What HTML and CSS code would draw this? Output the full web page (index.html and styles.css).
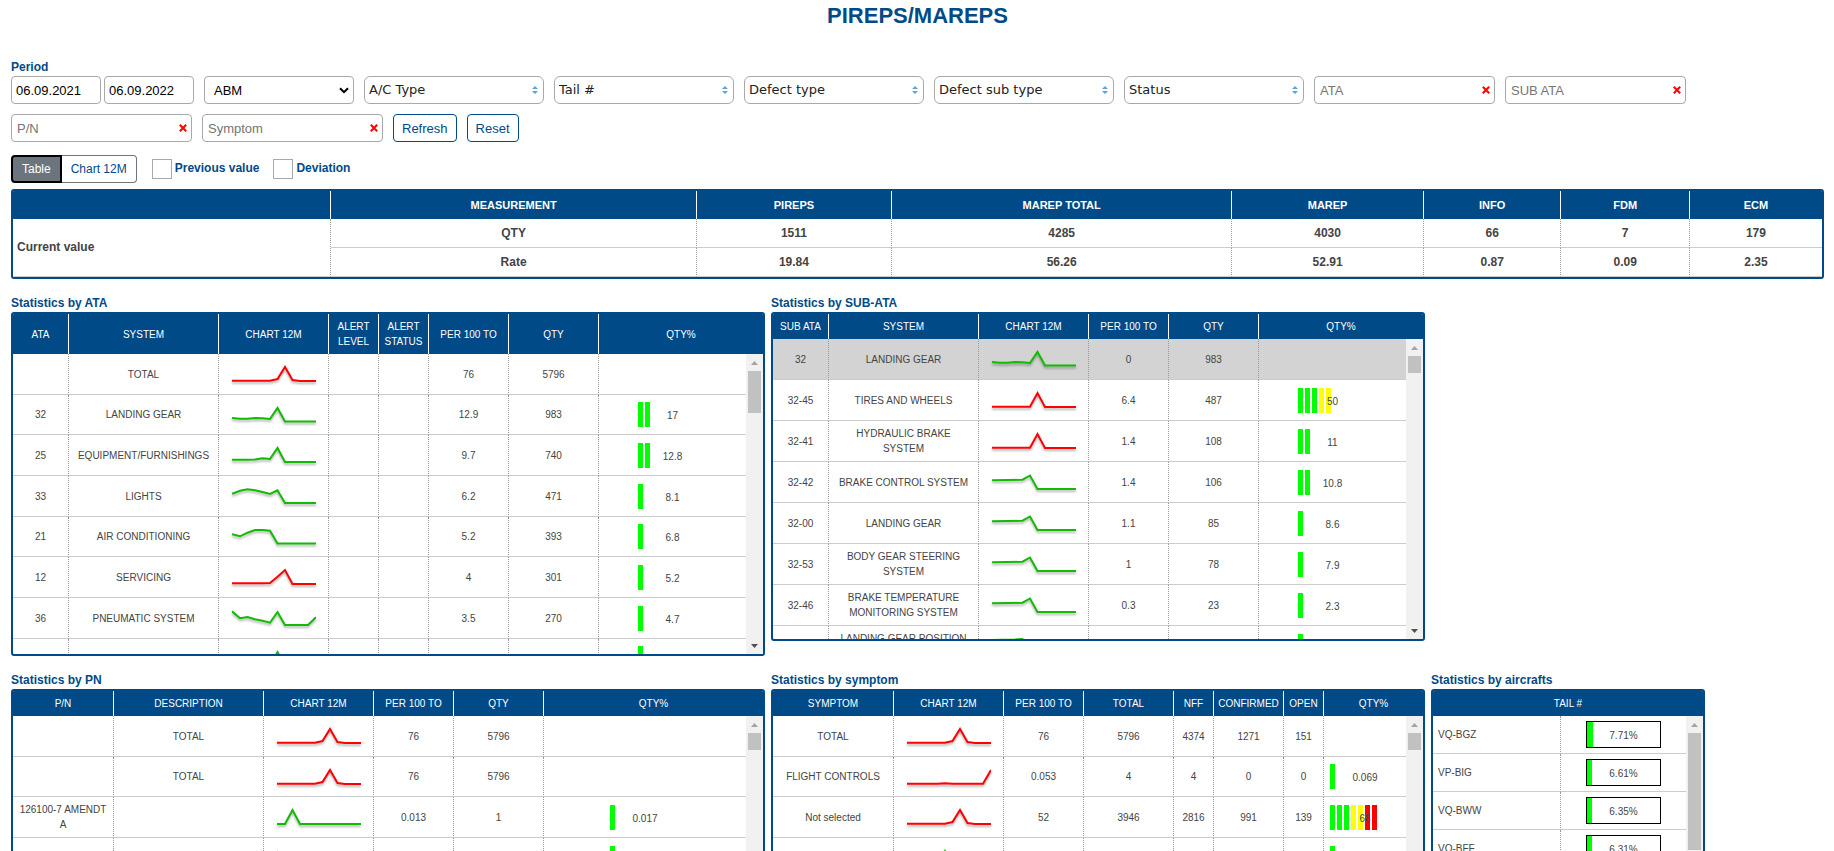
FILE: index.html
```html
<!DOCTYPE html>
<html lang="en">
<head>
<meta charset="utf-8">
<title>PIREPS/MAREPS</title>
<link rel="stylesheet" href="styles.css">
</head>
<body>
<svg class="defs" aria-hidden="true">
  <symbol id="updown" viewBox="0 0 6 8"><path d="M3 0 6 3H0zM3 8 0 5h6z"/></symbol>
  <symbol id="chevron" viewBox="0 0 10 7"><path d="M1 1.2 5 5.2 9 1.2"/></symbol>
  <symbol id="cross" viewBox="0 0 8 8"><path d="M.8.8 7.2 7.2M7.2.8.8 7.2"/></symbol>
  <symbol id="up" viewBox="0 0 7 4"><path d="M3.500 0 7 4H0z"/></symbol>
  <symbol id="down" viewBox="0 0 7 4"><path d="M0 0h7L3.500 4z"/></symbol>
  <symbol id="c-total" viewBox="0 0 84 24"><polyline points="0,18.700 38,18.700 45.500,17 53,5 60.500,18 68,19 84,19"/></symbol>
  <symbol id="c-gear" viewBox="0 0 84 24"><polyline points="0,15 8,15.700 15.500,15.700 23,15 30.500,15.300 38,16 45.500,5 53,18.500 84,18.500"/></symbol>
  <symbol id="c-equip" viewBox="0 0 84 24"><polyline points="0,16.700 15.500,16.700 23,16.400 30.500,15.300 38,16 45.500,5 53,19 84,19"/></symbol>
  <symbol id="c-lights" viewBox="0 0 84 24"><polyline points="0,9.700 8,6.700 15.500,5.300 23,6.300 30.500,8 38,10 45.500,6.300 53,19 84,19"/></symbol>
  <symbol id="c-air" viewBox="0 0 84 24"><polyline points="0,9.300 8,11.300 15.500,7.700 23,5 30.500,5 38,5.700 45.500,18.500 84,18.500"/></symbol>
  <symbol id="c-serv" viewBox="0 0 84 24"><polyline points="0,18.300 30.500,18.300 38,18 45.500,11.700 53,5 60.500,19 84,19"/></symbol>
  <symbol id="c-pneu" viewBox="0 0 84 24"><polyline points="0,5.300 8,12.300 15.500,11 23,13.300 30.500,14.700 38,16.700 45.500,6 53,19 76,19 84,11.300"/></symbol>
  <symbol id="c-peak" viewBox="0 0 84 24"><polyline points="0,18.700 38,18.700 45.500,5 53,19 84,19"/></symbol>
  <symbol id="c-brake" viewBox="0 0 84 24"><polyline points="0,10.300 30.500,9.700 38,5.500 45.500,19 84,19"/></symbol>
  <symbol id="c-pos" viewBox="0 0 84 24"><polyline points="0,6 23,5.500 30.500,5 38,19 84,19"/></symbol>
  <symbol id="c-early" viewBox="0 0 84 24"><polyline points="0,19 8,19 15.500,5 23,19 84,19"/></symbol>
  <symbol id="c-late" viewBox="0 0 84 24"><polyline points="0,18.700 30.500,18.700 38,18.200 45.500,18.700 76,18.700 84,5"/></symbol>
  <symbol id="c-mid" viewBox="0 0 84 24"><polyline points="0,19 30.500,19 38,5 45.500,19 84,19"/></symbol>
  <symbol id="c-first" viewBox="0 0 84 24"><polyline points="0,5 8,19 84,19"/></symbol>
</svg>

<h1>PIREPS/MAREPS</h1>

<form class="filters">
  <label class="label" for="from">Period</label>
  <div class="row">
    <div class="period">
      <input class="field date" id="from" type="text" value="06.09.2021">
      <input class="field date" type="text" aria-label="Period end" value="06.09.2022">
    </div>
    <div class="wrap operator"><select class="field" aria-label="Operator"><option>ABM</option></select><svg class="chevron"><use href="#chevron"/></svg></div>
    <div class="wrap multi"><select class="field" aria-label="A/C Type"><option>A/C Type</option></select><svg class="updown"><use href="#updown"/></svg></div>
    <div class="wrap multi"><select class="field" aria-label="Tail"><option>Tail #</option></select><svg class="updown"><use href="#updown"/></svg></div>
    <div class="wrap multi"><select class="field" aria-label="Defect type"><option>Defect type</option></select><svg class="updown"><use href="#updown"/></svg></div>
    <div class="wrap multi"><select class="field" aria-label="Defect sub type"><option>Defect sub type</option></select><svg class="updown"><use href="#updown"/></svg></div>
    <div class="wrap multi"><select class="field" aria-label="Status"><option>Status</option></select><svg class="updown"><use href="#updown"/></svg></div>
    <div class="wrap search"><input class="field" type="text" placeholder="ATA" aria-label="ATA"><button class="clear" type="button" aria-label="Clear"><svg><use href="#cross"/></svg></button></div>
    <div class="wrap search"><input class="field" type="text" placeholder="SUB ATA" aria-label="SUB ATA"><button class="clear" type="button" aria-label="Clear"><svg><use href="#cross"/></svg></button></div>
    <div class="wrap search"><input class="field" type="text" placeholder="P/N" aria-label="P/N"><button class="clear" type="button" aria-label="Clear"><svg><use href="#cross"/></svg></button></div>
    <div class="wrap search"><input class="field" type="text" placeholder="Symptom" aria-label="Symptom"><button class="clear" type="button" aria-label="Clear"><svg><use href="#cross"/></svg></button></div>
    <button class="btn" type="button">Refresh</button>
    <button class="btn" type="button">Reset</button>
  </div>
</form>

<div class="options">
  <div class="toggle"><button class="active" type="button">Table</button><button type="button">Chart 12M</button></div>
  <div class="check"><input type="checkbox" id="prev"><label class="label" for="prev">Previous value</label></div>
  <div class="check"><input type="checkbox" id="dev"><label class="label" for="dev">Deviation</label></div>
</div>

<div class="panel summary">
  <table>
    <colgroup><col class="s1"><col class="s2"><col class="s3"><col class="s4"><col class="s5"><col class="s6"><col class="s7"><col></colgroup>
    <thead><tr><th></th><th>MEASUREMENT</th><th>PIREPS</th><th>MAREP TOTAL</th><th>MAREP</th><th>INFO</th><th>FDM</th><th>ECM</th></tr></thead>
    <tbody>
      <tr><td class="name" rowspan="2">Current value</td><td>QTY</td><td>1511</td><td>4285</td><td>4030</td><td>66</td><td>7</td><td>179</td></tr>
      <tr><td>Rate</td><td>19.84</td><td>56.26</td><td>52.91</td><td>0.87</td><td>0.09</td><td>2.35</td></tr>
    </tbody>
  </table>
</div>

<div class="stats">
  <section class="wide">
    <h2>Statistics by ATA</h2>
    <div class="panel">
      <table>
        <colgroup><col class="w56"><col class="w150"><col class="w110"><col class="w50"><col class="w50"><col class="w80"><col class="w90"><col></colgroup>
        <thead><tr><th>ATA</th><th>SYSTEM</th><th>CHART 12M</th><th>ALERT LEVEL</th><th>ALERT STATUS</th><th>PER 100 TO</th><th>QTY</th><th>QTY%</th></tr></thead>
      </table>
      <div class="body">
        <table>
          <colgroup><col class="w56"><col class="w150"><col class="w110"><col class="w50"><col class="w50"><col class="w80"><col class="w90"><col></colgroup>
          <tbody>
            <tr><td></td><td>TOTAL</td><td><svg class="spark red"><use href="#c-total"/></svg></td><td></td><td></td><td>76</td><td>5796</td><td></td></tr>
            <tr><td>32</td><td>LANDING GEAR</td><td><svg class="spark"><use href="#c-gear"/></svg></td><td></td><td></td><td>12.9</td><td>983</td><td><div class="gauge"><i></i><i></i><span>17</span></div></td></tr>
            <tr><td>25</td><td>EQUIPMENT/FURNISHINGS</td><td><svg class="spark"><use href="#c-equip"/></svg></td><td></td><td></td><td>9.7</td><td>740</td><td><div class="gauge"><i></i><i></i><span>12.8</span></div></td></tr>
            <tr><td>33</td><td>LIGHTS</td><td><svg class="spark"><use href="#c-lights"/></svg></td><td></td><td></td><td>6.2</td><td>471</td><td><div class="gauge"><i></i><span>8.1</span></div></td></tr>
            <tr><td>21</td><td>AIR CONDITIONING</td><td><svg class="spark"><use href="#c-air"/></svg></td><td></td><td></td><td>5.2</td><td>393</td><td><div class="gauge"><i></i><span>6.8</span></div></td></tr>
            <tr><td>12</td><td>SERVICING</td><td><svg class="spark red"><use href="#c-serv"/></svg></td><td></td><td></td><td>4</td><td>301</td><td><div class="gauge"><i></i><span>5.2</span></div></td></tr>
            <tr><td>36</td><td>PNEUMATIC SYSTEM</td><td><svg class="spark"><use href="#c-pneu"/></svg></td><td></td><td></td><td>3.5</td><td>270</td><td><div class="gauge"><i></i><span>4.7</span></div></td></tr>
            <tr><td></td><td></td><td><svg class="spark"><use href="#c-peak"/></svg></td><td></td><td></td><td></td><td></td><td><div class="gauge"><i></i></div></td></tr>
          </tbody>
        </table>
        <div class="bar"><svg class="up"><use href="#up"/></svg><div class="thumb medium"></div><svg class="down"><use href="#down"/></svg></div>
      </div>
    </div>
  </section>

  <section class="middle">
    <h2>Statistics by SUB-ATA</h2>
    <div class="panel">
      <table>
        <colgroup><col class="w56"><col class="w150"><col class="w110"><col class="w80"><col class="w90"><col></colgroup>
        <thead><tr><th>SUB ATA</th><th>SYSTEM</th><th>CHART 12M</th><th>PER 100 TO</th><th>QTY</th><th>QTY%</th></tr></thead>
      </table>
      <div class="body">
        <table class="sub">
          <colgroup><col class="w56"><col class="w150"><col class="w110"><col class="w80"><col class="w90"><col></colgroup>
          <tbody>
            <tr class="selected"><td>32</td><td>LANDING GEAR</td><td><svg class="spark"><use href="#c-gear"/></svg></td><td>0</td><td>983</td><td></td></tr>
            <tr><td>32-45</td><td>TIRES AND WHEELS</td><td><svg class="spark red"><use href="#c-peak"/></svg></td><td>6.4</td><td>487</td><td><div class="gauge"><i></i><i></i><i></i><i class="y"></i><i class="y"></i><span>50</span></div></td></tr>
            <tr><td>32-41</td><td>HYDRAULIC BRAKE<br>SYSTEM</td><td><svg class="spark red"><use href="#c-peak"/></svg></td><td>1.4</td><td>108</td><td><div class="gauge"><i></i><i></i><span>11</span></div></td></tr>
            <tr><td>32-42</td><td>BRAKE CONTROL SYSTEM</td><td><svg class="spark"><use href="#c-brake"/></svg></td><td>1.4</td><td>106</td><td><div class="gauge"><i></i><i></i><span>10.8</span></div></td></tr>
            <tr><td>32-00</td><td>LANDING GEAR</td><td><svg class="spark"><use href="#c-brake"/></svg></td><td>1.1</td><td>85</td><td><div class="gauge"><i></i><span>8.6</span></div></td></tr>
            <tr><td>32-53</td><td>BODY GEAR STEERING SYSTEM</td><td><svg class="spark"><use href="#c-brake"/></svg></td><td>1</td><td>78</td><td><div class="gauge"><i></i><span>7.9</span></div></td></tr>
            <tr><td>32-46</td><td>BRAKE TEMPERATURE MONITORING SYSTEM</td><td><svg class="spark"><use href="#c-brake"/></svg></td><td>0.3</td><td>23</td><td><div class="gauge"><i></i><span>2.3</span></div></td></tr>
            <tr><td></td><td>LANDING GEAR POSITION<br>&nbsp;</td><td><svg class="spark"><use href="#c-pos"/></svg></td><td></td><td></td><td><div class="gauge"><i></i></div></td></tr>
          </tbody>
        </table>
        <div class="bar"><svg class="up"><use href="#up"/></svg><div class="thumb"></div><svg class="down"><use href="#down"/></svg></div>
      </div>
    </div>
  </section>
</div>

<div class="stats">
  <section class="wide">
    <h2>Statistics by PN</h2>
    <div class="panel">
      <table>
        <colgroup><col class="w101"><col class="w150"><col class="w110"><col class="w80"><col class="w90"><col></colgroup>
        <thead><tr><th>P/N</th><th>DESCRIPTION</th><th>CHART 12M</th><th>PER 100 TO</th><th>QTY</th><th>QTY%</th></tr></thead>
      </table>
      <div class="body">
        <table>
          <colgroup><col class="w101"><col class="w150"><col class="w110"><col class="w80"><col class="w90"><col></colgroup>
          <tbody>
            <tr><td></td><td>TOTAL</td><td><svg class="spark red"><use href="#c-total"/></svg></td><td>76</td><td>5796</td><td></td></tr>
            <tr><td></td><td>TOTAL</td><td><svg class="spark red"><use href="#c-total"/></svg></td><td>76</td><td>5796</td><td></td></tr>
            <tr><td>126100-7 AMENDT A</td><td></td><td><svg class="spark"><use href="#c-early"/></svg></td><td>0.013</td><td>1</td><td><div class="gauge"><i></i><span>0.017</span></div></td></tr>
            <tr><td></td><td></td><td><svg class="spark"><use href="#c-first"/></svg></td><td></td><td></td><td><div class="gauge"><i></i></div></td></tr>
          </tbody>
        </table>
        <div class="bar"><svg class="up"><use href="#up"/></svg><div class="thumb"></div><svg class="down"><use href="#down"/></svg></div>
      </div>
    </div>
  </section>

  <section class="middle">
    <h2>Statistics by symptom</h2>
    <div class="panel">
      <table>
        <colgroup><col class="w121"><col class="w110"><col class="w80"><col class="w90"><col class="w40"><col class="w70"><col class="w40"><col></colgroup>
        <thead><tr><th>SYMPTOM</th><th>CHART 12M</th><th>PER 100 TO</th><th>TOTAL</th><th>NFF</th><th>CONFIRMED</th><th>OPEN</th><th>QTY%</th></tr></thead>
      </table>
      <div class="body">
        <table>
          <colgroup><col class="w121"><col class="w110"><col class="w80"><col class="w90"><col class="w40"><col class="w70"><col class="w40"><col></colgroup>
          <tbody>
            <tr><td>TOTAL</td><td><svg class="spark red"><use href="#c-total"/></svg></td><td>76</td><td>5796</td><td>4374</td><td>1271</td><td>151</td><td></td></tr>
            <tr><td>FLIGHT CONTROLS</td><td><svg class="spark red"><use href="#c-late"/></svg></td><td>0.053</td><td>4</td><td>4</td><td>0</td><td>0</td><td><div class="gauge"><i></i><span>0.069</span></div></td></tr>
            <tr><td>Not selected</td><td><svg class="spark red"><use href="#c-total"/></svg></td><td>52</td><td>3946</td><td>2816</td><td>991</td><td>139</td><td><div class="gauge"><i></i><i></i><i></i><i class="y"></i><i class="y"></i><i class="r"></i><i class="r"></i><span>68</span></div></td></tr>
            <tr><td></td><td><svg class="spark"><use href="#c-mid"/></svg></td><td></td><td></td><td></td><td></td><td></td><td><div class="gauge"><i></i></div></td></tr>
          </tbody>
        </table>
        <div class="bar"><svg class="up"><use href="#up"/></svg><div class="thumb"></div><svg class="down"><use href="#down"/></svg></div>
      </div>
    </div>
  </section>

  <section class="narrow">
    <h2>Statistics by aircrafts</h2>
    <div class="panel">
      <table><thead><tr><th>TAIL #</th></tr></thead></table>
      <div class="body">
        <table class="tails">
          <colgroup><col class="w128"><col></colgroup>
          <tbody>
            <tr><td class="name">VQ-BGZ</td><td><div class="meter"><b style="width:7.71%"></b><span>7.71%</span></div></td></tr>
            <tr><td class="name">VP-BIG</td><td><div class="meter"><b style="width:6.61%"></b><span>6.61%</span></div></td></tr>
            <tr><td class="name">VQ-BWW</td><td><div class="meter"><b style="width:6.35%"></b><span>6.35%</span></div></td></tr>
            <tr><td class="name">VQ-BFF</td><td><div class="meter"><b style="width:6.31%"></b><span>6.31%</span></div></td></tr>
          </tbody>
        </table>
        <div class="bar"><svg class="up"><use href="#up"/></svg><div class="thumb long"></div><svg class="down"><use href="#down"/></svg></div>
      </div>
    </div>
  </section>
</div>
</body>
</html>
```
FILE: styles.css
```css
:root {
  --blue: #004a87;
  --text: #444;
}

* { box-sizing: border-box; }

html { scrollbar-width: none; }

body {
  margin: 0;
  padding: 0 10px 0 11px;
  background: #fff;
  color: var(--text);
  font: 10px/15px "Liberation Sans", Arial, sans-serif;
}

.defs { position: absolute; width: 0; height: 0; }

h1 {
  margin: 0 0 26px;
  color: var(--blue);
  font-size: 22px;
  line-height: 32px;
  text-align: center;
}

h2, .label {
  display: block;
  margin: 0;
  color: var(--blue);
  font-size: 12px;
  font-weight: bold;
  line-height: 18px;
}

/* filters */
.row {
  display: flex;
  flex-wrap: wrap;
  gap: 10px;
  max-width: 1700px;
}

.period { display: flex; gap: 3px; }

.field {
  display: block;
  width: 100%;
  height: 28px;
  margin: 0;
  padding: 0 5px;
  border: 1px solid #a9a9a9;
  border-radius: 4px;
  background: #fff;
  color: #000;
  font: 13px "Liberation Sans", Arial, sans-serif;
  appearance: none;
}

.field::placeholder { color: #757575; }
.date { width: 90px; padding: 0 4px; }
.wrap { position: relative; }
.operator { width: 150px; }
.operator .field { padding-left: 9px; }
.multi { width: 180px; }
.multi .field {
  padding: 0 4px 2px;
  border-radius: 6px;
  color: #222;
  font: 13px "DejaVu Sans", Verdana, sans-serif;
}
.search { width: 181px; }

.chevron, .updown, .clear {
  position: absolute;
  top: 0;
  bottom: 0;
  margin: auto 0;
  pointer-events: none;
}
.chevron { right: 5px; width: 10px; height: 7px; fill: none; stroke: #000; stroke-width: 2; }
.updown { right: 6px; width: 6px; height: 8px; fill: #5ba4d4; }
.clear {
  right: 5px;
  width: 8px;
  height: 8px;
  padding: 0;
  border: 0;
  background: none;
  pointer-events: auto;
}
.clear svg { display: block; width: 8px; height: 8px; stroke: #f00; stroke-width: 2; }

.btn {
  height: 28px;
  padding: 0 8px;
  border: 1px solid var(--blue);
  border-radius: 4px;
  background: #fff;
  color: var(--blue);
  font: 13px "Liberation Sans", Arial, sans-serif;
}

/* view options */
.options { display: flex; align-items: center; margin: 13px 0 6px; }
.toggle { display: flex; margin-right: 15px; }
.toggle button {
  height: 28px;
  padding: 0 9px;
  border: 1px solid #6c757d;
  border-left: 0;
  border-radius: 0 4px 4px 0;
  background: #fff;
  color: var(--blue);
  font: 12px "Liberation Sans", Arial, sans-serif;
}
.toggle .active {
  border: 2px solid #000;
  border-radius: 4px 0 0 4px;
  background: #6c757d;
  color: #fff;
}
.check { display: flex; gap: 3px; margin-right: 14px; }
.check input {
  width: 20px;
  height: 20px;
  margin: 0;
  border: 1px solid #a9a9a9;
  background: #fff;
  appearance: none;
}

/* tables */
.panel {
  overflow: hidden;
  border: 2px solid var(--blue);
  border-radius: 3px;
}

table {
  width: 100%;
  border-spacing: 0;
  table-layout: fixed;
}

th, td { text-align: center; border-right: 1px solid #fff; }
th {
  padding: 5px 2px;
  background: var(--blue);
  color: #fff;
  font-weight: normal;
}
td {
  padding: 0 5px;
  border-right: 1px dotted #999;
  border-bottom: 1px solid #ccc;
}
th:last-child, td:last-child { border-right: 0; }

td.name { padding-left: 5px; text-align: left; }

.summary { margin-bottom: 15px; font-size: 12px; font-weight: bold; }
.summary th { height: 28px; font-size: 11px; font-weight: bold; }
.summary td { height: 29px; padding: 0 4px; }
.s1 { width: 17.6%; }
.s2 { width: 20.2%; }
.s3 { width: 10.8%; }
.s4 { width: 18.8%; }
.s5 { width: 10.6%; }
.s6 { width: 7.6%; }
.s7 { width: 7.1%; }

.stats { display: flex; align-items: flex-start; gap: 6px; margin-bottom: 15px; }
.wide { width: 754px; }
.middle { width: 654px; }
.narrow { width: 274px; }

.body { display: flex; height: 300px; overflow: hidden; }
.body table { flex: 1; width: 0; align-self: flex-start; }
.body tr { height: 41px; }
.body tr:nth-child(3n+2) { height: 40px; }
.body .sub tr { height: 41px; }
.body .tails tr { height: 38px; }
.selected { background: #d3d3d3; }

.w40 { width: 40px; }
.w50 { width: 50px; }
.w56 { width: 56px; }
.w70 { width: 70px; }
.w80 { width: 80px; }
.w90 { width: 90px; }
.w101 { width: 101px; }
.w110 { width: 110px; }
.w121 { width: 121px; }
.w128 { width: 128px; }
.w150 { width: 150px; }

.spark {
  display: block;
  width: 84px;
  height: 24px;
  margin: 0 auto;
  fill: none;
  stroke: #1b0;
  stroke-width: 2;
  filter: drop-shadow(0 2px 1px rgba(0, 0, 0, .3));
}
.spark.red { stroke: #f00; }

.gauge, .meter { position: relative; display: flex; margin: 0 auto; }
.gauge { gap: 2px; width: 70px; height: 25px; }
.gauge i { width: 5px; background: #0f0; }
.gauge .y { background: #ff0; }
.gauge .r { background: #f00; }
.gauge span, .meter span {
  position: absolute;
  inset: 0;
  line-height: 27px;
}
.meter { width: 75px; height: 27px; border: 1px solid #000; }
.meter b { background: #0f0; }

/* scroll bar */
.bar {
  display: flex;
  flex-direction: column;
  align-items: center;
  width: 17px;
  background: #f1f1f1;
}
.bar svg { flex: none; width: 7px; height: 4px; margin: 7px 0 6px; }
.bar .up { fill: #a3a3a3; }
.bar .down { margin-top: auto; fill: #505050; }
.thumb { width: 13px; height: 17px; background: #c1c1c1; }
.thumb.medium { height: 42px; }
.thumb.long { height: 117px; }
```
